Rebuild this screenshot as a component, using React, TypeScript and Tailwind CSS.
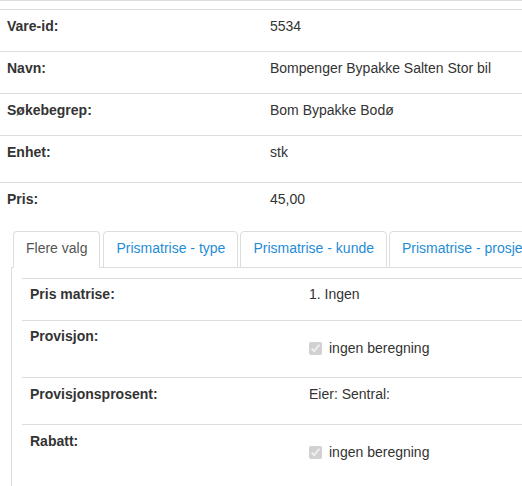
const ITEM_ROWS = [
  { label: 'Vare-id:', value: '5534', h: 'h-[42px]' },
  { label: 'Navn:', value: 'Bompenger Bypakke Salten Stor bil', h: 'h-[42px]' },
  { label: 'Søkebegrep:', value: 'Bom Bypakke Bodø', h: 'h-[42px]' },
  { label: 'Enhet:', value: 'stk', h: 'h-[47px]' },
];

const TABS = ['Flere valg', 'Prismatrise - type', 'Prismatrise - kunde', 'Prismatrise - prosjekt'];

function CheckValue({ text }: { text: string }) {
  return (
    <label className="mt-[10px] flex h-[20px] items-center gap-[7px]">
      <input type="checkbox" checked disabled readOnly className="h-[13px] w-[13px] shrink-0" />
      <span>{text}</span>
    </label>
  );
}

export default function App() {
  return (
    <div
      className="h-[486px] w-[522px] overflow-hidden bg-white text-[14px] leading-[20px] text-[#333]"
      style={{ fontFamily: '"Liberation Sans", Arial, sans-serif' }}
    >
      {/* leftover of the row above */}
      <div className="h-[9px] border-t border-[#ddd]" />

      {ITEM_ROWS.map((r) => (
        <div key={r.label} className={`grid grid-cols-[262px_1fr] border-t border-[#ddd] pt-[6px] ${r.h}`}>
          <div className="pl-[7px] font-bold">{r.label}</div>
          <div className="whitespace-nowrap pl-[8px]">{r.value}</div>
        </div>
      ))}

      <div className="grid h-[49px] grid-cols-[262px_1fr] border-t border-[#ddd] pt-[6px]">
        <div className="pl-[7px] font-bold">Pris:</div>
        <div className="pl-[8px]">45,00</div>
      </div>

      <div className="ml-[11px]">
        <div className="flex gap-[2px] border-b border-[#ddd] pl-[2px]">
          {TABS.map((t, i) => (
            <div
              key={t}
              className={
                i === 0
                  ? '-mb-px mr-px shrink-0 whitespace-nowrap rounded-t-[4px] border border-[#ddd] border-b-white bg-white px-[12px] pb-[9px] pt-[6px] text-[#555]'
                  : '-mb-px shrink-0 whitespace-nowrap rounded-t-[4px] border border-[#ddd] px-[12px] pb-[9px] pt-[6px] text-[#1f8dd6]'
              }
            >
              {t}
            </div>
          ))}
        </div>

        <div className="h-[240px] border-l border-[#ddd] pl-[10px] pt-[10px]">
          <div className="w-[560px]">
            <div className="grid h-[42px] grid-cols-[279px_1fr] border-t border-[#ddd] pt-[5px]">
              <div className="pl-[8px] font-bold">Pris matrise:</div>
              <div className="pl-[8px]">1. Ingen</div>
            </div>
            <div className="grid h-[57px] grid-cols-[279px_1fr] border-t border-[#ddd] pt-[5px]">
              <div className="pl-[8px] font-bold">Provisjon:</div>
              <div className="mt-[2px] pl-[8px]">
                <CheckValue text="ingen beregning" />
              </div>
            </div>
            <div className="grid h-[47px] grid-cols-[279px_1fr] border-t border-[#ddd] pt-[6px]">
              <div className="pl-[8px] font-bold">Provisjonsprosent:</div>
              <div className="pl-[8px]">Eier: Sentral:</div>
            </div>
            <div className="grid h-[57px] grid-cols-[279px_1fr] border-t border-[#ddd] pt-[6px]">
              <div className="pl-[8px] font-bold">Rabatt:</div>
              <div className="mt-[1px] pl-[8px]">
                <CheckValue text="ingen beregning" />
              </div>
            </div>
          </div>
        </div>
      </div>
    </div>
  );
}
